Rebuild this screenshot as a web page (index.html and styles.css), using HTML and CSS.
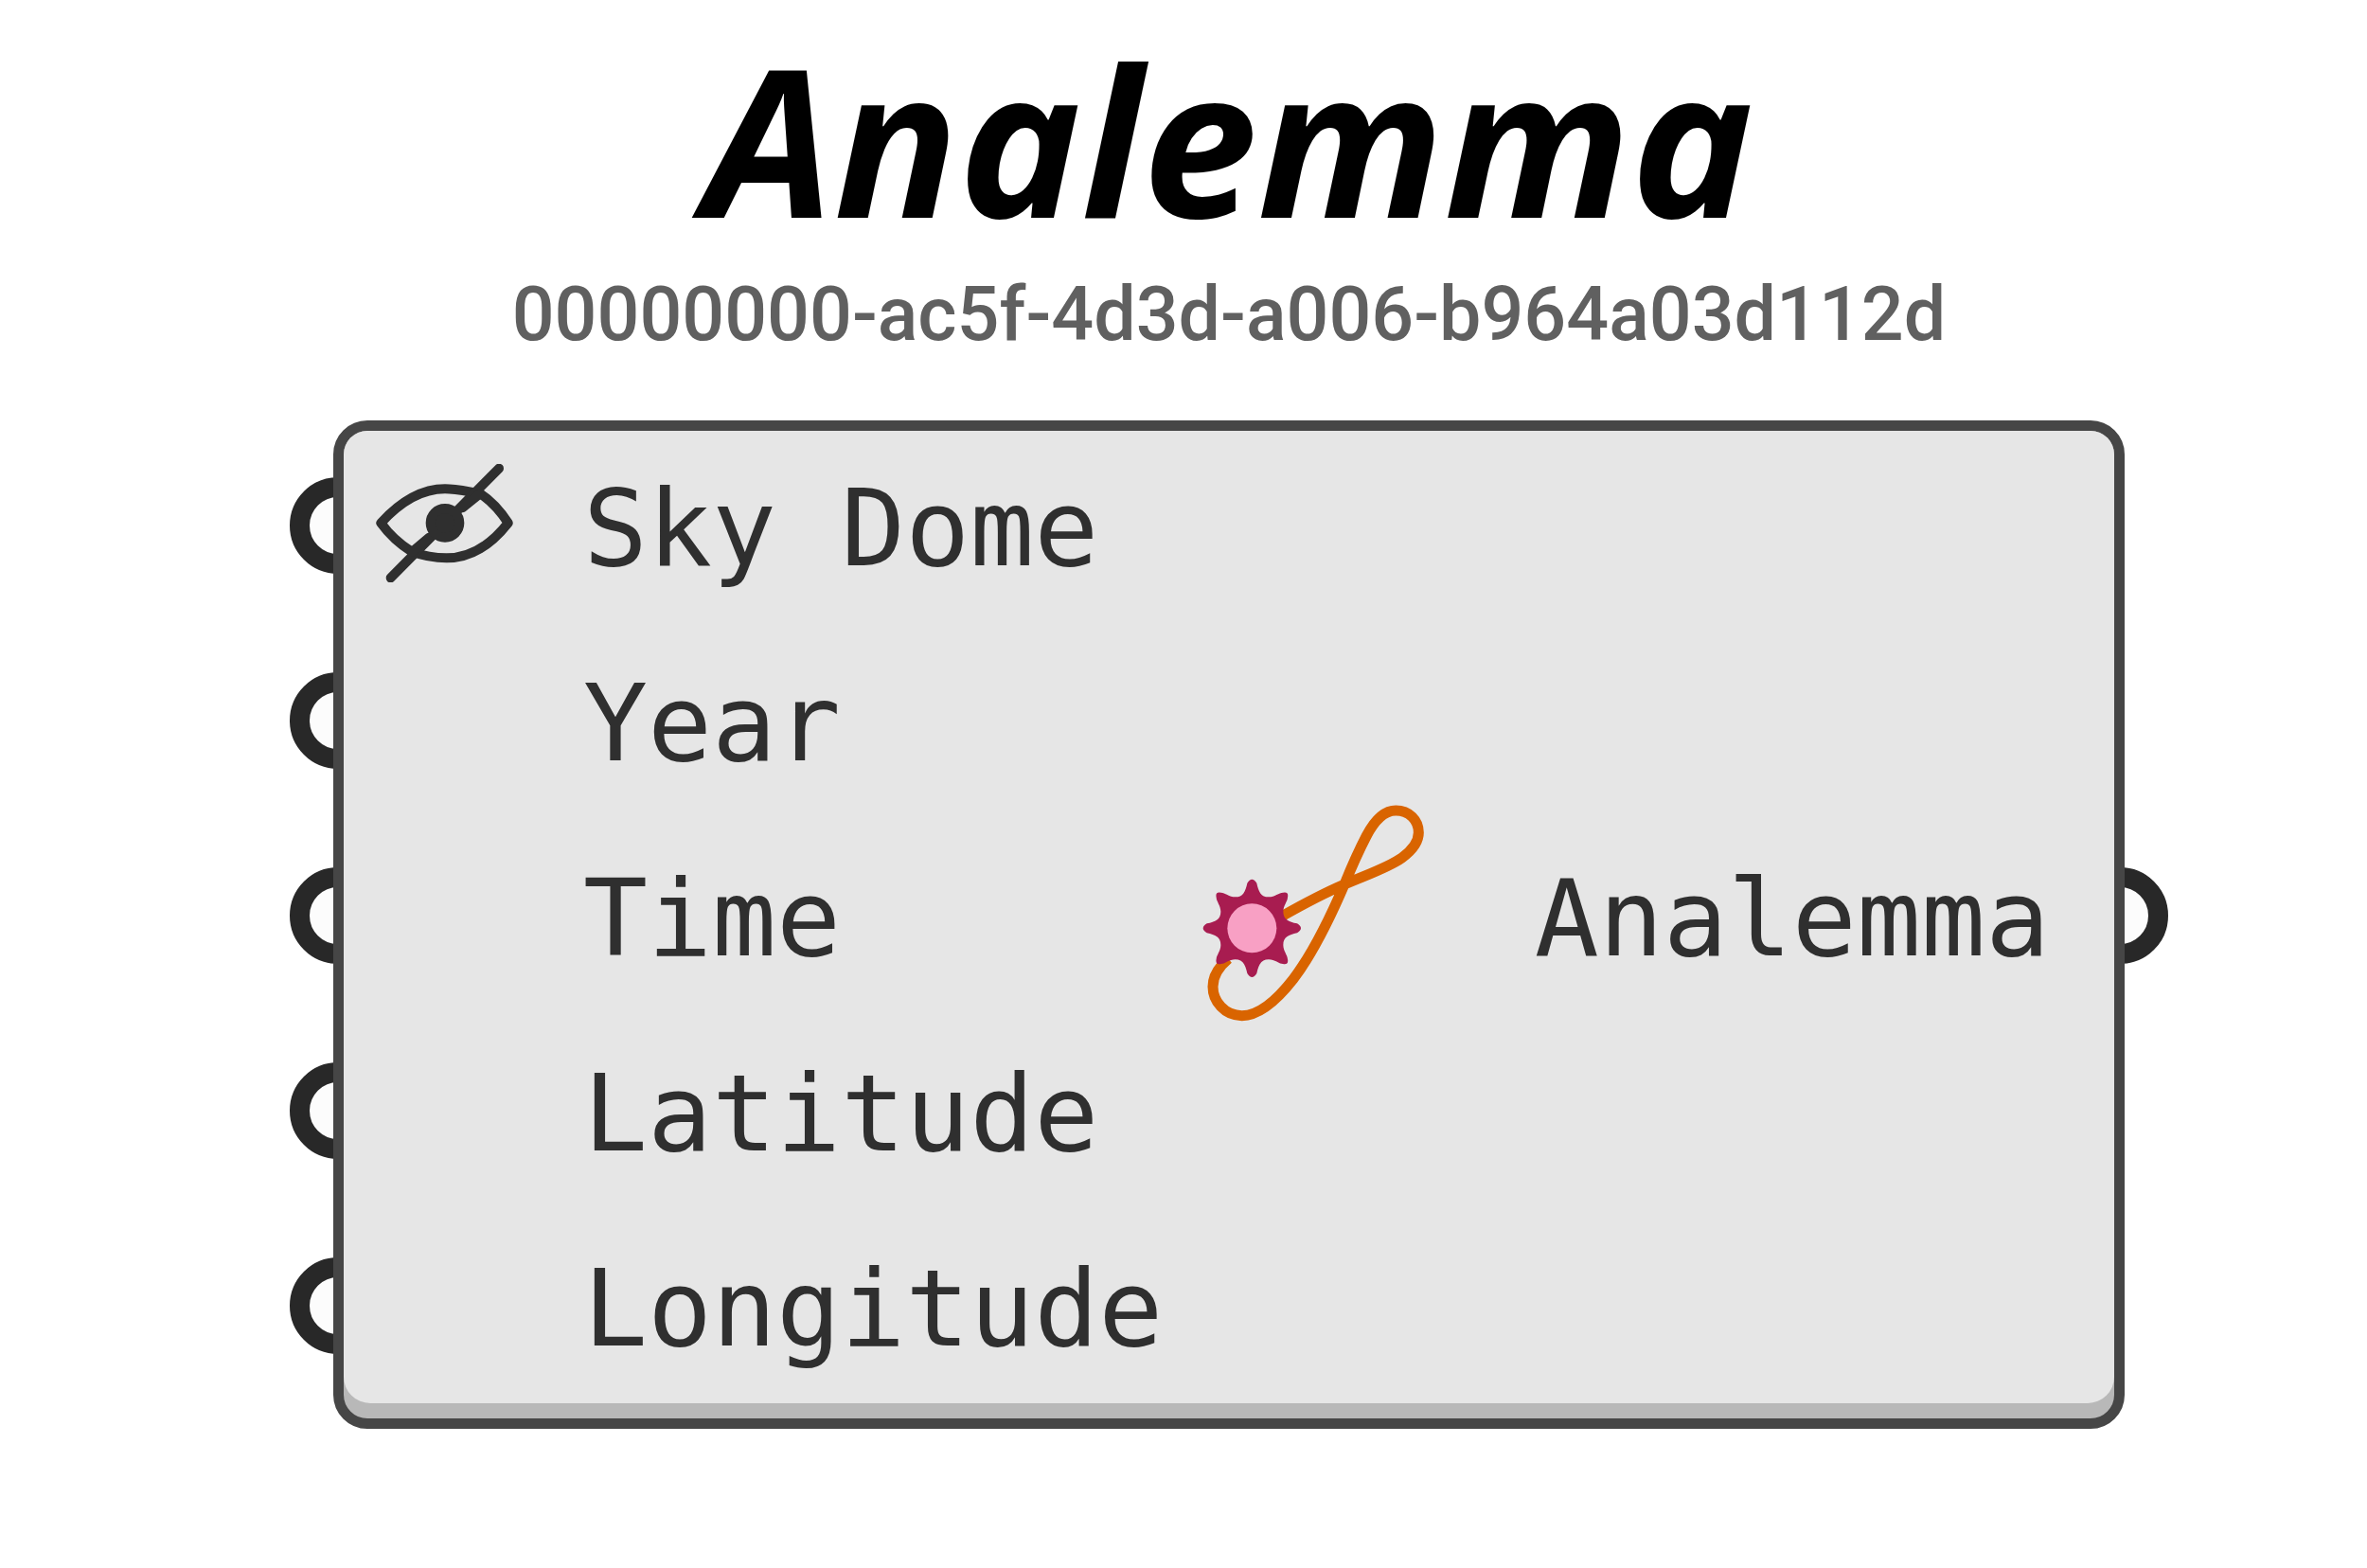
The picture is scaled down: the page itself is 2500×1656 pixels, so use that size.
FILE: index.html
```html
<!DOCTYPE html>
<html lang="en">
<head>
  <meta charset="UTF-8">
  <meta name="viewport" content="width=device-width, initial-scale=1.0">
  <title>Analemma</title>
  <link rel="stylesheet" href="styles.css">
</head>
<body>
  <main class="component">
    <h1 class="title">Analemma</h1>
    <p class="guid">00000000-ac5f-4d3d-a006-b964a03d112d</p>

    <div class="card">
      <div class="card-body">
        <ul class="params inputs">
          <li class="param">
            <span class="port"></span>
            <span class="param-state">
              <svg class="eye" viewBox="321 177 435 375" aria-hidden="true">
                <path d="M337 364 C400 295 465 256 540 256 C570 256 605 263 650 270 C690 296 720 333 740 364 C682 438 620 475 545 475 C505 475 470 468 435 455 C395 430 363 400 337 364 Z"/>
                <path d="M711 191 L368 538"/>
                <path d="M650 272 L595 316 M490 410 L435 456"/>
                <circle cx="540" cy="364" r="46"/>
              </svg>
            </span>
            <span class="param-name">Sky Dome</span>
          </li>
          <li class="param">
            <span class="port"></span>
            <span class="param-state"></span>
            <span class="param-name">Year</span>
          </li>
          <li class="param">
            <span class="port"></span>
            <span class="param-state"></span>
            <span class="param-name">Time</span>
          </li>
          <li class="param">
            <span class="port"></span>
            <span class="param-state"></span>
            <span class="param-name">Latitude</span>
          </li>
          <li class="param">
            <span class="port"></span>
            <span class="param-state"></span>
            <span class="param-name">Longitude</span>
          </li>
        </ul>

        <svg class="icon" viewBox="90 60 705 690" aria-hidden="true">
          <!-- figure-eight path of the sun -->
          <path class="orbit" d="M340 414 C400 380 470 342 540 312 C620 278 680 258 722 228 C758 202 775 178 775 148 C775 108 744 78 703 78 C665 78 634 112 610 158 C584 208 562 258 540 312 C498 410 440 530 378 612 C325 680 270 728 215 728 C160 728 123 682 123 636 C123 602 140 575 172 548"/>
          <g transform="translate(247 451)">
            <path class="sun-rays" d="M-15 -143 Q0 -167 15 -143 C21 -116 28 -99 53 -99 C72 -99 86 -113 98 -113 Q117 -117 113 -98 C113 -86 99 -72 99 -53 C99 -28 116 -21 143 -15 Q167 0 143 15 C116 21 99 28 99 53 C99 72 113 86 113 98 Q117 117 98 113 C86 113 72 99 53 99 C28 99 21 116 15 143 Q0 167 -15 143 C-21 116 -28 99 -53 99 C-72 99 -86 113 -98 113 Q-117 117 -113 98 C-113 86 -99 72 -99 53 C-99 28 -116 21 -143 15 Q-167 0 -143 -15 C-116 -21 -99 -28 -99 -53 C-99 -72 -113 -86 -113 -98 Q-117 -117 -98 -113 C-86 -113 -72 -99 -53 -99 C-28 -99 -21 -116 -15 -143 Z"/>
            <circle class="sun-disc" r="78"/>
          </g>
        </svg>

        <ul class="params outputs">
          <li class="param">
            <span class="param-name">Analemma</span>
            <span class="port"></span>
          </li>
        </ul>
      </div>
    </div>
  </main>
</body>
</html>
```

FILE: styles.css
```css
:root {
  --ink: #2f2f2f;
  --port: #282828;
  --edge: #464646;
  --card: #e6e6e6;
  --card-shade: #b8b8b8;
  --orbit: #d96400;
  --sun: #f8a0c4;
  --sun-rays: #a81c50;
}

* {
  box-sizing: border-box;
}

body {
  margin: 0;
  background: #fff;
}

.component {
  isolation: isolate;
  padding: 36px 10.24% 100px 14.08%;
}

.title {
  margin: 0 0 26px;
  color: #000;
  font: italic 700 218px/220px "Open Sans", sans-serif;
  text-align: center;
}

.guid {
  margin: 0 0 62px;
  color: #606060;
  font: 500 79px/100px Roboto, sans-serif;
  text-align: center;
  white-space: nowrap;
}

.card {
  border: 11px solid var(--edge);
  border-radius: 36px;
  background: var(--card-shade);
  padding-bottom: 16px;
}

.card-body {
  display: flex;
  align-items: center;
  padding: 2px 0 5px;
  border-radius: 25px 25px 28px 28px;
  background: var(--card);
}

.params {
  display: flex;
  flex-direction: column;
  gap: 10px;
  margin: 0;
  padding: 0;
  list-style: none;
  color: var(--ink);
  font: 400 113px/132px "DejaVu Sans Mono", monospace;
}

.param {
  position: relative;
  display: flex;
  align-items: center;
  height: 196px;
}

.param-name {
  padding-top: 6px;
}

.param-state {
  display: flex;
  width: 253px;
  padding: 0 0 6px 34px;
}

.outputs {
  margin-left: auto;
}

.outputs .param {
  padding-right: 68px;
}

/* ring tucked behind the card, only its outer half shows */
.port {
  position: absolute;
  z-index: -1;
  top: 47px;
  left: -57px;
  width: 102px;
  height: 102px;
  border: 21px solid var(--port);
  border-radius: 50%;
  background: #fcfcfc;
}

.outputs .port {
  right: -57px;
  left: auto;
}

.eye {
  width: 145px;
  height: 125px;
  fill: none;
  stroke: var(--ink);
  stroke-width: 30;
  stroke-linecap: round;
  stroke-linejoin: round;
}

.eye circle {
  fill: var(--ink);
}

.icon {
  width: 235px;
  height: 230px;
  margin: 0 0 4px 42px;
}

.orbit {
  fill: none;
  stroke: var(--orbit);
  stroke-width: 33;
}

.sun-rays {
  fill: var(--sun-rays);
}

.sun-disc {
  fill: var(--sun);
}
```
